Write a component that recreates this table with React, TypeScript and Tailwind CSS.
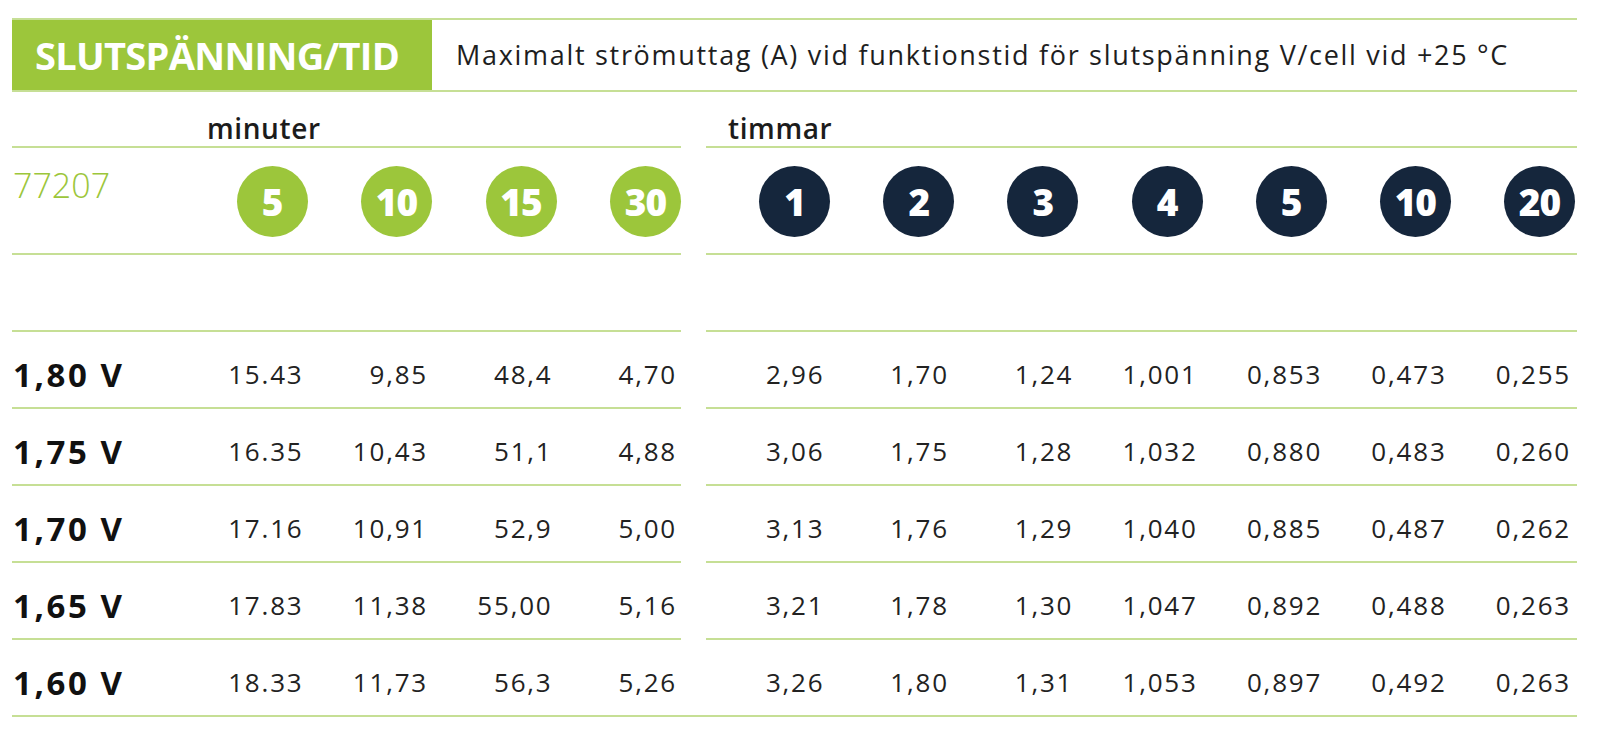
import { clsx } from 'clsx';

const MINUTES = ['5', '10', '15', '30'];
const HOURS = ['1', '2', '3', '4', '5', '10', '20'];

const ROWS: { label: string; minutes: string[]; hours: string[] }[] = [
  { label: '1,80 V', minutes: ['15.43', '9,85', '48,4', '4,70'], hours: ['2,96', '1,70', '1,24', '1,001', '0,853', '0,473', '0,255'] },
  { label: '1,75 V', minutes: ['16.35', '10,43', '51,1', '4,88'], hours: ['3,06', '1,75', '1,28', '1,032', '0,880', '0,483', '0,260'] },
  { label: '1,70 V', minutes: ['17.16', '10,91', '52,9', '5,00'], hours: ['3,13', '1,76', '1,29', '1,040', '0,885', '0,487', '0,262'] },
  { label: '1,65 V', minutes: ['17.83', '11,38', '55,00', '5,16'], hours: ['3,21', '1,78', '1,30', '1,047', '0,892', '0,488', '0,263'] },
  { label: '1,60 V', minutes: ['18.33', '11,73', '56,3', '5,26'], hours: ['3,26', '1,80', '1,31', '1,053', '0,897', '0,492', '0,263'] },
];

const LINE = 'border-[#c6df95]';

function Badge({ value, dark }: { value: string; dark?: boolean }): JSX.Element {
  return (
    <div
      className={clsx(
        'flex h-[71px] w-[71px] items-center justify-center rounded-full text-[37px] font-extrabold leading-none tracking-[-1px] text-white',
        dark ? 'bg-[#15263c]' : 'bg-[#9cc63b]',
      )}
    >
      {value}
    </div>
  );
}

export default function App(): JSX.Element {
  return (
    <div className="h-[747px] w-[1600px] bg-white pl-[12px] pt-[18px] font-['Open_Sans',sans-serif] text-[#1c1c1c]">
      <div className="w-[1565px]">
        {/* title bar */}
        <div className={clsx('flex h-[74px] border-y-2', LINE)}>
          <div className="flex w-[420px] items-center bg-[#9cc63b] pl-[23px]">
            <span className="text-[38px] font-bold leading-none tracking-[-0.7px] text-white">SLUTSPÄNNING/TID</span>
          </div>
          <div className="flex items-center pb-[2px] pl-[24px] text-[27px] leading-none tracking-[1.7px] text-[#1e1e1e]">
            Maximalt strömuttag (A) vid funktionstid för slutspänning V/cell vid +25 °C
          </div>
        </div>

        {/* minuter / timmar */}
        <div className="flex h-[56px]">
          <div className={clsx('flex w-[669px] items-end border-b-2 pb-[4px] pl-[195px]', LINE)}>
            <span className="text-[28px] font-semibold leading-none tracking-[0.6px]">minuter</span>
          </div>
          <div className="w-[25px]" />
          <div className={clsx('flex w-[871px] items-end border-b-2 pb-[4px] pl-[22px]', LINE)}>
            <span className="text-[28px] font-semibold leading-none tracking-[0.6px]">timmar</span>
          </div>
        </div>

        {/* badges */}
        <div className="flex h-[107px]">
          <div className={clsx('grid w-[669px] grid-cols-[171px_repeat(4,1fr)] border-b-2', LINE)}>
            <div className="pl-[1px] pt-[20px] text-[34px] font-light leading-none text-[#9cc63b]">77207</div>
            {MINUTES.map((m) => (
              <div key={m} className="flex items-center justify-end pt-[2px]">
                <Badge value={m} />
              </div>
            ))}
          </div>
          <div className="w-[25px]" />
          <div className={clsx('grid w-[871px] grid-cols-7 border-b-2 pr-[2px]', LINE)}>
            {HOURS.map((h) => (
              <div key={h} className="flex items-center justify-end pt-[2px]">
                <Badge value={h} dark />
              </div>
            ))}
          </div>
        </div>

        {/* empty row */}
        <div className="flex h-[77px]">
          <div className={clsx('w-[669px] border-b-2', LINE)} />
          <div className="w-[25px]" />
          <div className={clsx('w-[871px] border-b-2', LINE)} />
        </div>

        {/* values */}
        {ROWS.map((row, i) => {
          const last = i === ROWS.length - 1;
          return (
            <div key={row.label} className="flex h-[77px]">
              <div className={clsx('grid w-[669px] grid-cols-[171px_repeat(4,1fr)] border-b-2 pt-[9px]', LINE)}>
                <div className="flex items-center pl-[1px] text-[33px] font-bold leading-none tracking-[2.6px] text-[#111]">
                  {row.label}
                </div>
                {row.minutes.map((v, j) => (
                  <div key={j} className="flex items-center justify-end pr-[4px] text-[26px] leading-none tracking-[1.8px] text-[#222]">
                    {v}
                  </div>
                ))}
              </div>
              <div className={clsx('w-[25px]', last && 'border-b-2', last && LINE)} />
              <div className={clsx('grid w-[871px] grid-cols-7 border-b-2 pt-[9px]', LINE)}>
                {row.hours.map((v, j) => (
                  <div key={j} className="flex items-center justify-end pr-[6px] text-[26px] leading-none tracking-[1.8px] text-[#222]">
                    {v}
                  </div>
                ))}
              </div>
            </div>
          );
        })}
      </div>
    </div>
  );
}
